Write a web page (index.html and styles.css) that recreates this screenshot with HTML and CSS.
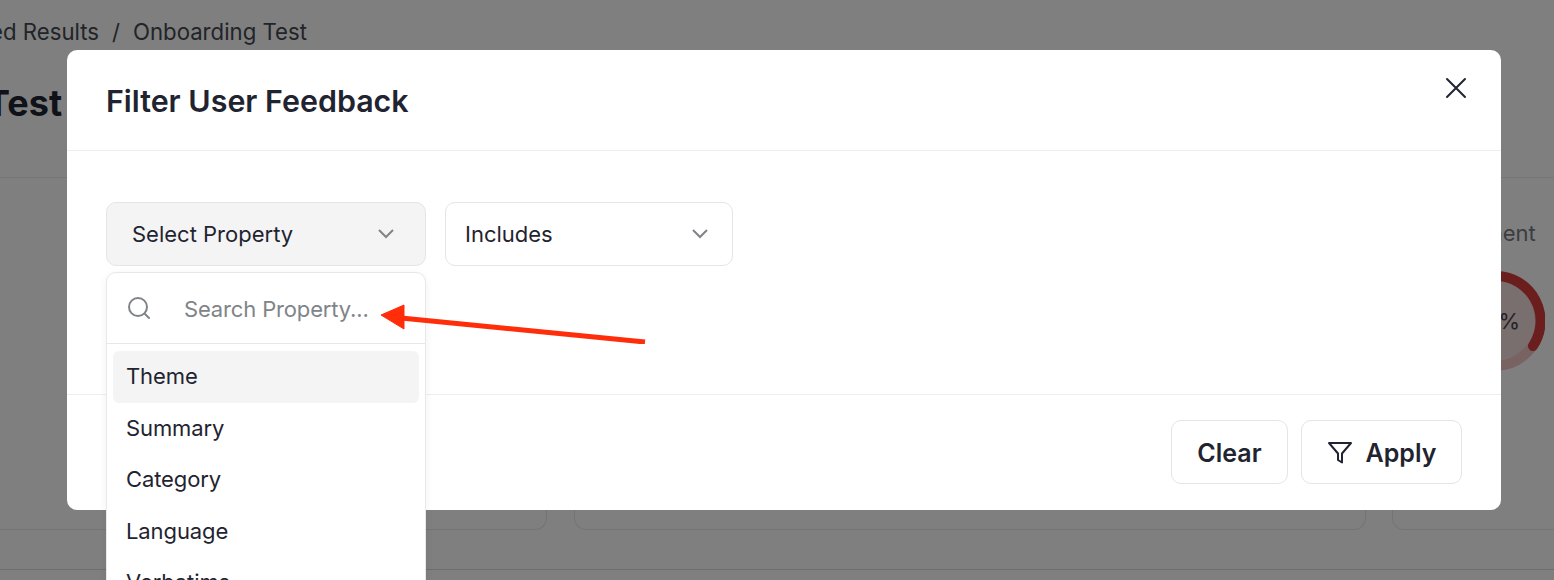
FILE: index.html
```html
<!DOCTYPE html>
<html lang="en">
<head>
  <meta charset="UTF-8">
  <title>Filter User Feedback</title>
  <link rel="stylesheet" href="styles.css">
</head>
<body>
<div class="page">
  <div class="breadcrumb">
    <span>Uploaded Results</span>
    <span class="slash">/</span>
    <span>Onboarding Test</span>
  </div>
  <div class="page-header">
    <h1>Onboarding Test</h1>
  </div>
  <div class="cards">
    <div class="card card-left"></div>
    <div class="card card-mid"></div>
    <div class="card card-right">
      <div class="card-label">Sentiment</div>
      <svg class="gauge" width="100" height="100" viewBox="0 0 100 100">
        <circle cx="50" cy="50" r="45" fill="#f3dede" stroke="#f0c4c4" stroke-width="10"/>
        <path d="M50 5A45 45 0 0 1 88 75" fill="none" stroke="#d43c3c" stroke-width="10" stroke-linecap="round"/>
        <text x="51" y="58" text-anchor="middle" class="gauge-text">25%</text>
      </svg>
    </div>
  </div>
  <div class="page-foot"></div>
</div>

<div class="overlay">
  <div class="modal">
    <div class="modal-header">
      <h2>Filter User Feedback</h2>
      <button class="close-btn">
        <svg width="24" height="24" viewBox="0 0 24 24" fill="none" stroke="#1f2430" stroke-width="2" stroke-linecap="round"><path d="M3 3l18 18M21 3L3 21"/></svg>
      </button>
    </div>
    <div class="modal-body">
      <div class="select-wrap">
        <div class="select select-open">
          <span>Select Property</span>
          <svg class="chevron" width="20" height="12" viewBox="0 0 20 12" fill="none" stroke="#808488" stroke-width="2"><path d="M3 2l7 7 7-7"/></svg>
        </div>
        <div class="dropdown">
          <div class="search-row">
            <svg width="26" height="26" viewBox="0 0 26 26" fill="none" stroke="#808488" stroke-width="2" stroke-linecap="round"><circle cx="12" cy="12" r="9"/><path d="M19 19l4 4"/></svg>
            <span class="placeholder">Search Property...</span>
          </div>
          <ul class="options">
            <li class="active">Theme</li>
            <li>Summary</li>
            <li>Category</li>
            <li>Language</li>
            <li>Verbatims</li>
          </ul>
        </div>
      </div>
      <div class="select select-plain">
        <span>Includes</span>
        <svg class="chevron" width="20" height="12" viewBox="0 0 20 12" fill="none" stroke="#808488" stroke-width="2"><path d="M3 2l7 7 7-7"/></svg>
      </div>
    </div>
    <div class="modal-footer">
      <button class="btn btn-clear">Clear</button>
      <button class="btn btn-apply">
        <svg width="26" height="26" viewBox="0 0 26 26" fill="none" stroke="#1f2430" stroke-width="2" stroke-linejoin="round"><path d="M2 3h22l-9 10.500v9l-4-2.500v-6.500z"/></svg>
        Apply
      </button>
    </div>
  </div>
</div>

<svg class="callout" width="280" height="40" viewBox="0 0 280 40">
  <path d="M278 38L34 14" stroke="#ff2d0a" stroke-width="5" fill="none"/>
  <path d="M14 11L37 1v24z" fill="#ff2d0a" stroke="#ff2d0a" stroke-linejoin="round"/>
</svg>
</body>
</html>
```

FILE: styles.css
```css
* {
  box-sizing: border-box;
}
html, body {
  margin: 0;
  height: 580px;
  overflow: hidden;
}
body {
  font-family: Inter, "Liberation Sans", sans-serif;
  color: #1f2430;
  position: relative;
}
.page {
  height: 580px;
  background: #fff;
  display: flex;
  flex-direction: column;
}
.breadcrumb {
  height: 62px;
  display: flex;
  align-items: center;
  gap: 13px;
  font-size: 22.200px;
  color: #454850;
  margin-left: -85px;
}
.page-header {
  height: 116px;
  border-bottom: 1px solid #ececec;
}
.page-header h1 {
  margin: 19px 0 0 -230px;
  font-size: 36px;
  font-weight: 700;
  white-space: nowrap;
}
.cards {
  flex: 1;
  display: flex;
  gap: 27px;
  padding-bottom: 39px;
  border-bottom: 1px solid #dcdcdc;
  margin-bottom: 10px;
}
.card {
  border: 1px solid #e8e8e8;
  border-top: none;
  border-radius: 0 0 12px 12px;
  flex-shrink: 0;
}
.card-left {
  width: 557px;
  margin-left: -10px;
}
.card-mid {
  width: 792px;
  margin-right: -1px;
}
.card-right {
  flex: 1 0 auto;
  margin-right: -10px;
  padding: 42px 0 0 38px;
}
.card-label {
  font-size: 22px;
  color: #777b80;
  white-space: nowrap;
}
.gauge {
  display: block;
  margin: 25px 0 0 14px;
}
.gauge-text {
  font: 22px Inter, sans-serif;
  fill: #454850;
}
.overlay {
  position: absolute;
  inset: 0;
  background: rgba(0, 0, 0, .5);
  padding: 50px 53px 70px 67px;
}
.modal {
  height: 460px;
  background: #fff;
  border-radius: 10px;
  display: flex;
  flex-direction: column;
}
.modal-header {
  height: 101px;
  flex-shrink: 0;
  border-bottom: 1px solid #eeeeee;
  display: flex;
  justify-content: space-between;
  padding: 30px 33px 0 39px;
}
.modal-header h2 {
  margin: 0;
  font-size: 30.400px;
  line-height: 42px;
  font-weight: 600;
}
.close-btn {
  width: 24px;
  height: 24px;
  padding: 0;
  margin-top: -4px;
  border: none;
  background: none;
}
.modal-body {
  flex: 1;
  display: flex;
  align-items: flex-start;
  gap: 19px;
  padding: 51px 39px 0;
  border-bottom: 1px solid #eeeeee;
}
.select-wrap {
  position: relative;
  width: 320px;
}
.select {
  height: 64px;
  border: 1px solid #e5e5e5;
  border-radius: 10px;
  font-size: 22px;
  display: flex;
  align-items: center;
  justify-content: space-between;
}
.select-open {
  background: #f4f4f4;
  padding: 0 29px 0 25px;
}
.select-plain {
  width: 288px;
  padding: 0 22px 0 19px;
}
.dropdown {
  position: absolute;
  top: 70px;
  left: 0;
  width: 320px;
  height: 340px;
  background: #fff;
  border: 1px solid #e8e8e8;
  border-radius: 10px;
  box-shadow: 0 2px 8px rgba(0, 0, 0, .06);
}
.search-row {
  height: 71px;
  border-bottom: 1px solid #e8e8e8;
  display: flex;
  align-items: center;
  gap: 32px;
  padding-left: 19px;
}
.placeholder {
  font-size: 22px;
  letter-spacing: -.15px;
  color: #808488;
  white-space: nowrap;
  position: relative;
  top: 1px;
}
.options {
  list-style: none;
  margin: 0;
  padding: 7px 6px;
}
.options li {
  height: 51.500px;
  line-height: 51px;
  padding-left: 13px;
  font-size: 22px;
  letter-spacing: -.1px;
  border-radius: 6px;
}
.options .active {
  background: #f4f4f4;
}
.modal-footer {
  height: 115px;
  flex-shrink: 0;
  display: flex;
  justify-content: flex-end;
  gap: 13px;
  padding: 25px 39px 0 0;
}
.btn {
  height: 64px;
  padding: 2px 0 0;
  border: 1px solid #e5e5e5;
  border-radius: 10px;
  background: #fff;
  font-family: inherit;
  font-size: 25px;
  font-weight: 600;
  color: #1f2430;
  display: flex;
  align-items: center;
  justify-content: center;
}
.btn-clear {
  width: 117px;
}
.btn-apply {
  width: 161px;
  gap: 13px;
}
.callout {
  position: absolute;
  left: 367px;
  top: 304px;
}
```
